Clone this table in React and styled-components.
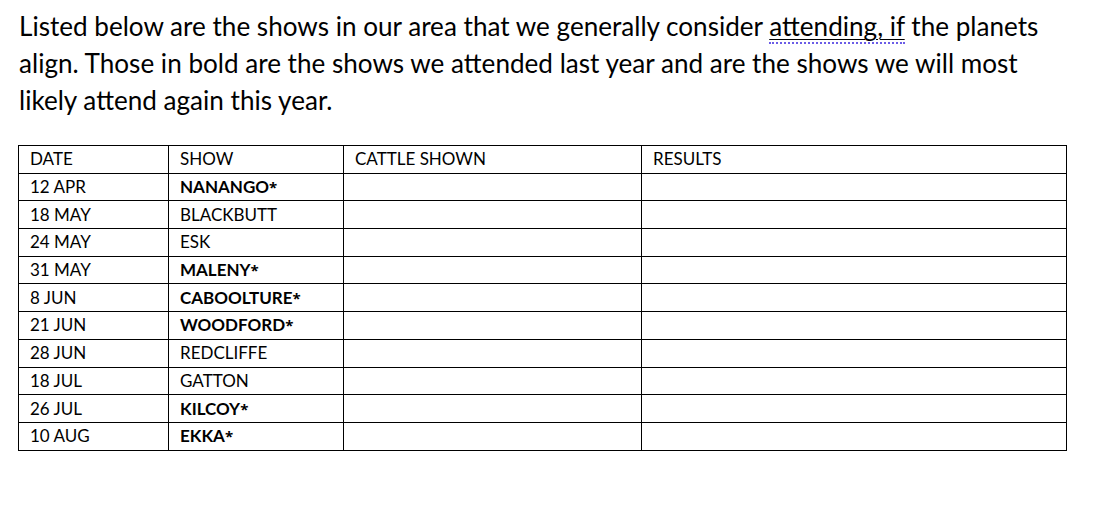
import styled, { createGlobalStyle } from "styled-components";

const GlobalStyle = createGlobalStyle`
  body {
    margin: 0;
    background: #fff;
    font-family: Lato, "Open Sans", sans-serif;
    color: #000;
  }
`;

const shows = [
  { date: "12 APR", show: "NANANGO", bold: true },
  { date: "18 MAY", show: "BLACKBUTT" },
  { date: "24 MAY", show: "ESK" },
  { date: "31 MAY", show: "MALENY", bold: true },
  { date: "8 JUN", show: "CABOOLTURE", bold: true },
  { date: "21 JUN", show: "WOODFORD", bold: true },
  { date: "28 JUN", show: "REDCLIFFE" },
  { date: "18 JUL", show: "GATTON" },
  { date: "26 JUL", show: "KILCOY", bold: true },
  { date: "10 AUG", show: "EKKA", bold: true },
];

function App() {
  return (
    <Page>
      <GlobalStyle />
      <Intro>
        Listed below are the shows in our area that we generally consider{" "}
        <Flagged>attending, if</Flagged> the planets
        <br />
        align. Those in bold are the shows we attended last year and are the
        shows we will most
        <br />
        likely attend again this year.
      </Intro>
      <ShowTable>
        <colgroup>
          <col style={{ width: 150 }} />
          <col style={{ width: 175 }} />
          <col style={{ width: 298 }} />
          <col style={{ width: 425 }} />
        </colgroup>
        <tbody>
          <Row>
            <Cell>DATE</Cell>
            <Cell>SHOW</Cell>
            <Cell>CATTLE SHOWN</Cell>
            <Cell>RESULTS</Cell>
          </Row>
          {shows.map((s) => (
            <Row key={s.date}>
              <Cell>{s.date}</Cell>
              <Cell $bold={s.bold}>
                {s.show}
                {s.bold ? <Star>*</Star> : null}
              </Cell>
              <Cell />
              <Cell />
            </Row>
          ))}
        </tbody>
      </ShowTable>
    </Page>
  );
}

const Page = styled.div`
  padding: 8px 0 0 18px;
  width: 1048px;
`;

const Intro = styled.p`
  margin: 0 0 26px 1px;
  font-size: 26.1px;
  line-height: 37px;
  width: 1070px;
  white-space: nowrap;
`;

const Flagged = styled.span`
  text-decoration: underline;
  text-decoration-thickness: 1px;
  text-underline-offset: 3px;
  border-bottom: 2px dotted #6b5ce7;
`;

const ShowTable = styled.table`
  border-collapse: collapse;
  table-layout: fixed;
  width: 1048px;
`;

const Row = styled.tr`
  height: 27.7px;
`;

const Cell = styled.td`
  border: 1px solid #000;
  padding: 0 0 0 11px;
  font-size: 17px;
  line-height: 20px;
  font-weight: ${(p) => (p.$bold ? 700 : 400)};
  white-space: nowrap;
`;

const Star = styled.span`
  font-family: "Open Sans", sans-serif;
  font-size: 15px;
`;

export default App;
